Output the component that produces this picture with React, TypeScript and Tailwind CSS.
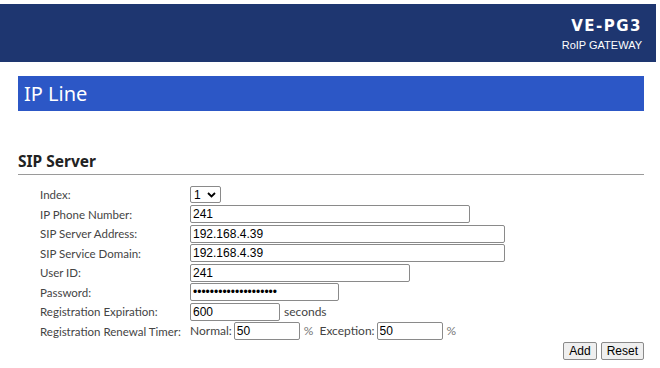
import React from "react";

const labelCls = "w-[150px] shrink-0 whitespace-nowrap text-[11.5px] text-[#444]";
const inputCls =
  "h-[18px] border border-[#8a8a8a] rounded-[2px] bg-white px-[2px] text-[12px] text-black outline-none [font-family:'Liberation_Sans',Arial,sans-serif]";

function Row({ label, children }: { label: string; children: React.ReactNode }) {
  return (
    <div className="flex h-[19.5px] items-center">
      <div className={labelCls}>{label}</div>
      <div className="flex items-center whitespace-nowrap">{children}</div>
    </div>
  );
}

export default function App() {
  return (
    <div className="w-[660px] h-[368px] bg-white overflow-hidden [font-family:'Noto_Sans','Open_Sans',sans-serif]">
      <div className="pt-[4px]">
        <div className="w-[656px] h-[58px] bg-[#1e3670] flex flex-col items-end justify-center pr-[14px] pt-[2px] text-white">
          <div className="text-[15px] font-bold leading-[18px] tracking-[1.5px] [font-family:'DejaVu_Sans',sans-serif]">VE-PG3</div>
          <div className="text-[11px] leading-[14px] mt-[3px] [font-family:'Liberation_Sans',Arial,sans-serif]">RoIP GATEWAY</div>
        </div>
      </div>
      <div className="ml-[18px] mt-[14px] w-[626px] h-[35px] bg-[#2c57c6] flex items-center pl-[6px]">
        <span className="text-white text-[20px] leading-none">IP Line</span>
      </div>
      <div className="ml-[18px] mt-[40px] w-[626px] border-b border-[#9a9a9a] pb-[3px]">
        <div className="text-[15.5px] font-bold text-[#222] leading-[20px]">SIP Server</div>
      </div>
      <div className="ml-[40px] mt-[10px] w-[604px] [font-family:'Lato',sans-serif]">
        <Row label="Index:">
          <div className="h-[17px] w-[31px] border border-[#8a8a8a] rounded-[2px] flex items-center pl-[3px] gap-[6px] text-[12px] [font-family:'Liberation_Sans',Arial,sans-serif]">
            <span>1</span>
            <svg width="9" height="6" viewBox="0 0 9 6">
              <path d="M1 1 L4.5 4.5 L8 1" fill="none" stroke="#000" strokeWidth="1.8" />
            </svg>
          </div>
        </Row>
        <Row label="IP Phone Number:">
          <input className={`${inputCls} w-[280px]`} defaultValue="241" />
        </Row>
        <Row label="SIP Server Address:">
          <input className={`${inputCls} w-[315px]`} defaultValue="192.168.4.39" />
        </Row>
        <Row label="SIP Service Domain:">
          <input className={`${inputCls} w-[315px]`} defaultValue="192.168.4.39" />
        </Row>
        <Row label="User ID:">
          <input className={`${inputCls} w-[220px]`} defaultValue="241" />
        </Row>
        <Row label="Password:">
          <input type="password" className={`${inputCls} w-[149px]`} defaultValue="aaaaaaaaaaaaaaaaaaaa" />
        </Row>
        <Row label="Registration Expiration:">
          <input className={`${inputCls} w-[90px]`} defaultValue="600" />
          <span className="ml-[4px] text-[12px] text-[#444]">seconds</span>
        </Row>
        <Row label="Registration Renewal Timer:">
          <span className="text-[12px] text-[#444] mr-[2px]">Normal:</span>
          <input className={`${inputCls} w-[66px]`} defaultValue="50" />
          <span className="ml-[4px] text-[12px] text-[#777]">%</span>
          <span className="ml-[6px] mr-[2px] text-[12px] text-[#444]">Exception:</span>
          <input className={`${inputCls} w-[66px]`} defaultValue="50" />
          <span className="ml-[4px] text-[12px] text-[#777]">%</span>
        </Row>
        <div className="flex justify-end gap-[4px] mt-[1px]">
          <button className="h-[18px] px-[5px] border border-[#8a8a8a] rounded-[2px] bg-[#efefef] text-[12px] leading-none [font-family:'Liberation_Sans',Arial,sans-serif]">Add</button>
          <button className="h-[18px] px-[5px] border border-[#8a8a8a] rounded-[2px] bg-[#efefef] text-[12px] leading-none [font-family:'Liberation_Sans',Arial,sans-serif]">Reset</button>
        </div>
      </div>
    </div>
  );
}
